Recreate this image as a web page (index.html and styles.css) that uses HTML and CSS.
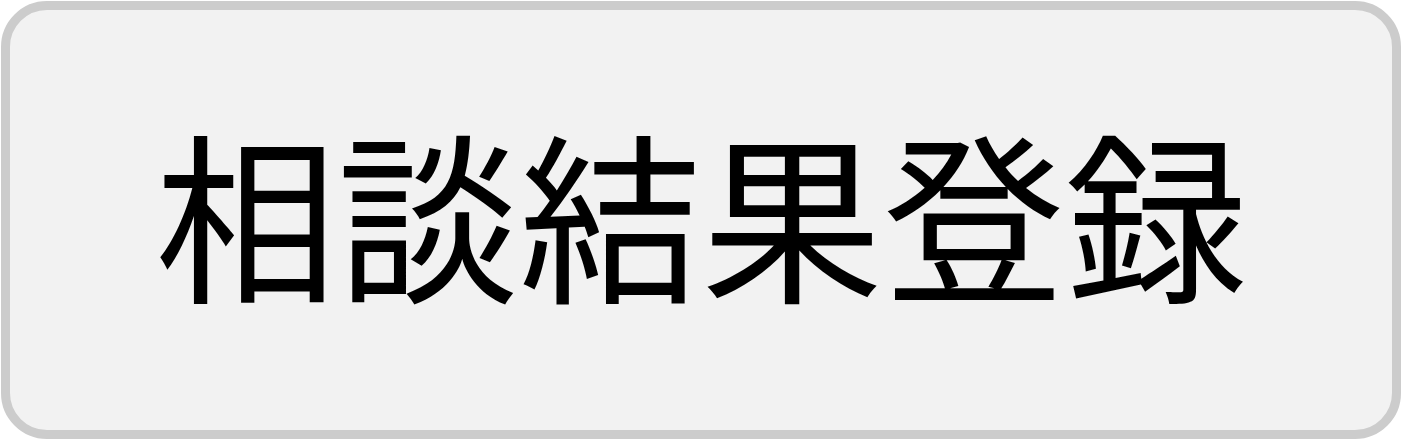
FILE: index.html
```html
<!DOCTYPE html>
<html lang="ja">
<head>
<meta charset="utf-8">
<link rel="stylesheet" href="styles.css">
</head>
<body>
<div class="btn"><span class="label">相談結果登録</span></div>
</body>
</html>
```
FILE: styles.css
```css
html, body { margin: 0; padding: 0; background: #ffffff; }
body { width: 1402px; height: 441px; overflow: hidden; }
.btn {
  box-sizing: border-box;
  margin: 1px;
  width: 1400px;
  height: 438px;
  border: 9px solid #cccccc;
  border-radius: 46px;
  background: #f2f2f2;
  display: flex;
  align-items: center;
  justify-content: center;
  padding-bottom: 20px;
}
.label {
  font-family: "Noto Sans CJK JP", "Noto Sans", sans-serif;
  font-size: 182px;
  font-weight: 400;
  color: #000000;
  line-height: 1;
  white-space: nowrap;
}
```
